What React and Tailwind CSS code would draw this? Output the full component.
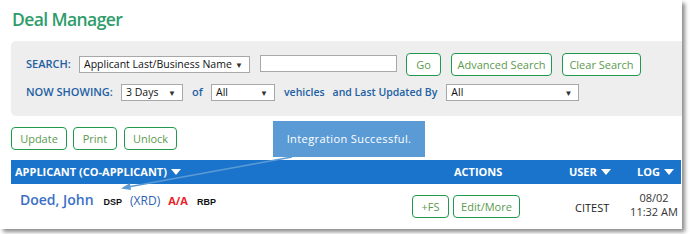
import React from 'react';

const font = { fontFamily: '"Open Sans", "Liberation Sans", sans-serif' };

const GreenButton = ({ children, className = '' }) => (
  <button
    className={`h-[23px] border border-[#1f9a4c] rounded-[4px] bg-white text-[11px] text-[#5b9a4e] leading-none whitespace-nowrap ${className}`}
  >
    {children}
  </button>
);

const FakeSelect = ({ label, className = '' }) => (
  <div
    className={`h-[17px] border border-[#a8a8a8] bg-white flex items-center justify-between pl-[4px] pr-[6px] text-[10.5px] font-medium text-[#111] leading-none whitespace-nowrap ${className}`}
  >
    <span>{label}</span>
    <span className="text-[8px] text-[#333]">▼</span>
  </div>
);

const Label = ({ children, className = '' }) => (
  <span className={`font-semibold text-[#2160a3] whitespace-nowrap ${className}`}>{children}</span>
);

const Caret = () => (
  <span className="inline-block w-0 h-0 border-l-[5px] border-r-[5px] border-t-[6px] border-l-transparent border-r-transparent border-t-white" />
);

export default function App() {
  return (
    <div className="w-[690px] h-[234px] bg-white" style={font}>
      <div className="relative w-[682px] h-[229px] bg-white shadow-[3px_3px_4px_rgba(0,0,0,0.45)] overflow-hidden pl-[11px] pt-[6px]">
        <h1 className="text-[17.5px] font-semibold tracking-[-0.6px] text-[#2f9c6c] leading-[26px] pl-[1px]">Deal Manager</h1>

        {/* Search panel */}
        <div className="mt-[9px] w-[680px] h-[75px] bg-[#eeeeee] rounded-[5px] pl-[15px] pt-[12px]">
          <div className="flex items-center h-[23px]">
            <Label className="w-[53px] text-[11px] font-bold">SEARCH:</Label>
            <FakeSelect label="Applicant Last/Business Name" className="w-[171px]" />
            <div className="ml-[10px] w-[137px] h-[17px] border border-[#a8a8a8] bg-white -mt-[2px]" />
            <GreenButton className="ml-[9px] w-[35px]">Go</GreenButton>
            <GreenButton className="ml-[10px] w-[101px]">Advanced Search</GreenButton>
            <GreenButton className="ml-[10px] w-[79px]">Clear Search</GreenButton>
          </div>
          <div className="flex items-center h-[17px] mt-[8px]">
            <Label className="w-[95px] text-[11px] font-bold">NOW SHOWING:</Label>
            <FakeSelect label="3 Days" className="w-[62px]" />
            <Label className="ml-[9px] w-[19px] text-[11px]">of</Label>
            <FakeSelect label="All" className="w-[64px]" />
            <Label className="ml-[9px] text-[10.5px]">vehicles</Label>
            <Label className="ml-[8px] text-[10.5px]">and Last Updated By</Label>
            <FakeSelect label="All" className="ml-[9px] w-[133px]" />
          </div>
        </div>

        {/* Action buttons */}
        <div className="flex items-center gap-[6px] mt-[11px] h-[23px]">
          <GreenButton className="w-[56px]">Update</GreenButton>
          <GreenButton className="w-[44px]">Print</GreenButton>
          <GreenButton className="w-[53px] ml-[1px]">Unlock</GreenButton>
        </div>

        {/* Table header */}
        <div className="mt-[10px] w-[670px] h-[24px] bg-[#1b74cb] flex items-center text-white text-[11px] font-bold">
          <div className="w-[394px] pl-[4px] flex items-center gap-[4px]">
            APPLICANT (CO-APPLICANT) <Caret />
          </div>
          <div className="w-[164px] pl-[49px]">ACTIONS</div>
          <div className="w-[68px] flex items-center gap-[4px]">
            USER <Caret />
          </div>
          <div className="flex items-center gap-[4px]">
            LOG <Caret />
          </div>
        </div>

        {/* Data row */}
        <div className="w-[670px] h-[45px] flex items-start">
          <div className="w-[394px] pl-[9px] pt-[5px] flex items-baseline">
            <span className="text-[14px] font-semibold text-[#3a6fc6]">Doed, John</span>
            <span className="ml-[10px] text-[9px] font-bold text-[#111]" style={{ fontFamily: '"Liberation Sans", sans-serif' }}>DSP</span>
            <span className="ml-[8px] text-[12px] font-medium text-[#2e62b0]">(XRD)</span>
            <span className="ml-[8px] text-[11px] font-bold text-[#e8242a]">A/A</span>
            <span className="ml-[9px] text-[9px] font-bold text-[#111]" style={{ fontFamily: '"Liberation Sans", sans-serif' }}>RBP</span>
          </div>
          <div className="w-[158px] pl-[7px] pt-[11px] flex gap-[4px]">
            <GreenButton className="w-[37px]">+FS</GreenButton>
            <GreenButton className="w-[67px]">Edit/More</GreenButton>
          </div>
          <div className="w-[64px] pt-[16px] pl-[12px] text-[11px] text-[#222]">CITEST</div>
          <div className="w-[52px] pt-[7px] pl-[2px] text-[11px] text-[#333] text-center leading-[14px]">
            <div>08/02</div>
            <div>11:32 AM</div>
          </div>
        </div>

        {/* Tooltip */}
        <div className="absolute left-[273px] top-[121px] w-[152px] h-[36px] bg-[#5b9bd5] flex items-center justify-center text-white text-[11px] tracking-[0.4px]">
          Integration Successful.
        </div>
        <svg className="absolute left-0 top-0 pointer-events-none" width="682" height="229">
          <line x1="292" y1="157" x2="128" y2="187" stroke="#5b9bd5" strokeWidth="1.5" />
          <polygon points="121,188.5 130,183 131,190" fill="#5b9bd5" />
        </svg>
      </div>
    </div>
  );
}
